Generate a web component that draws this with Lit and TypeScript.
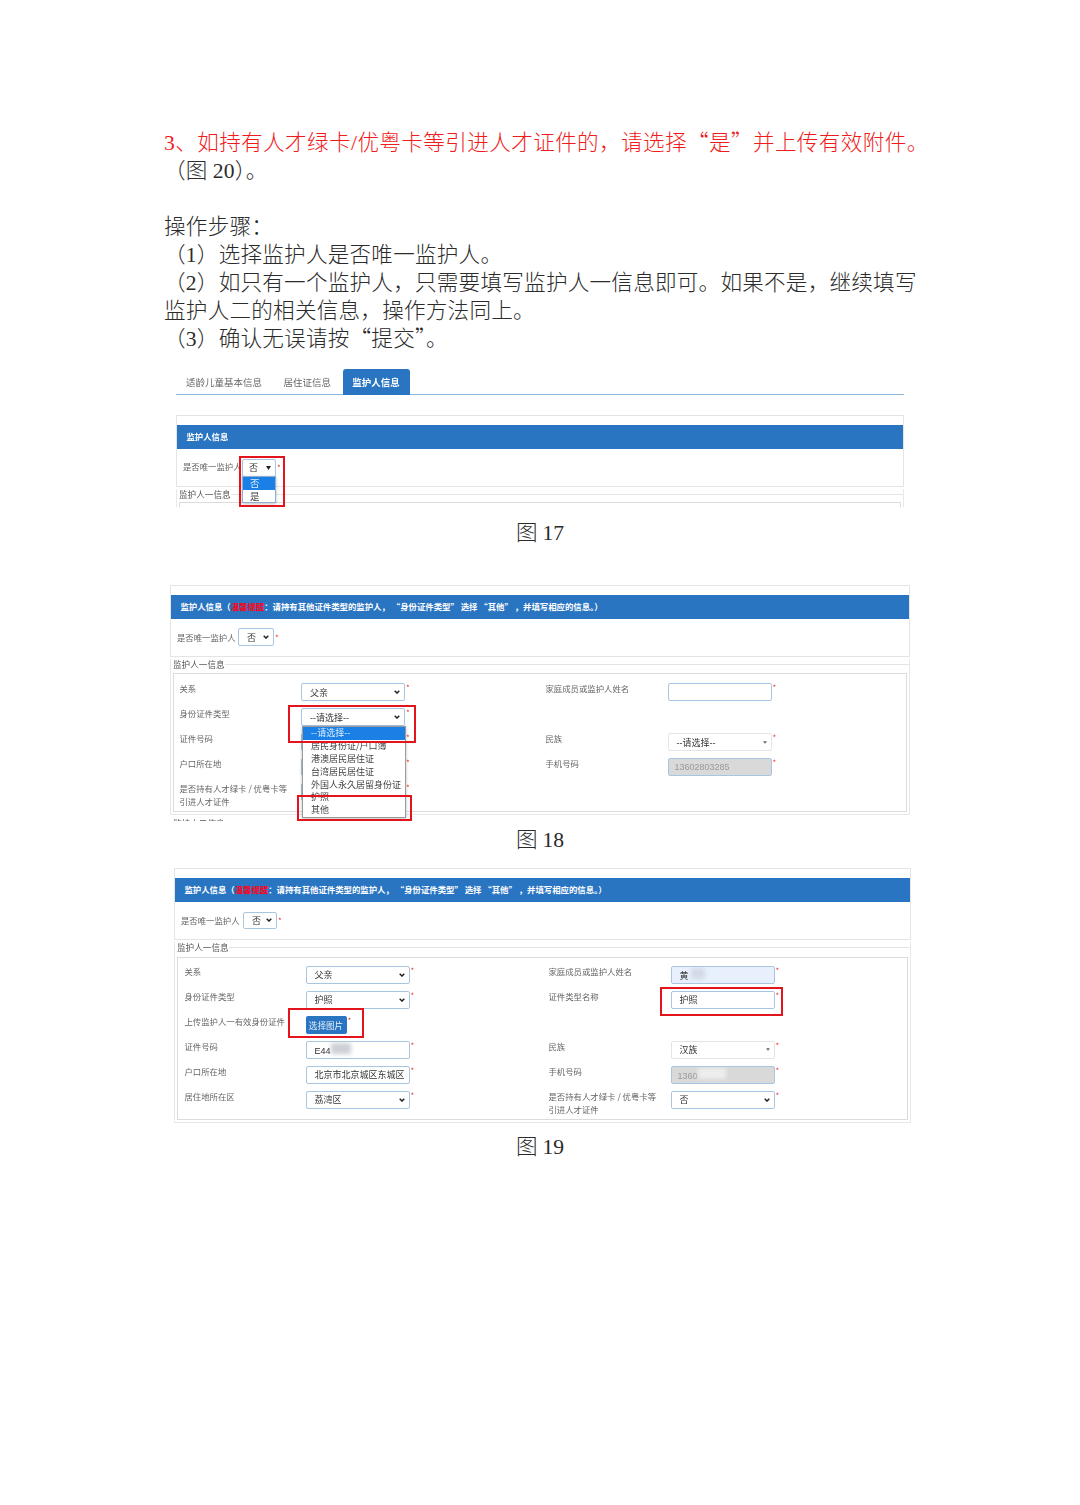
import { LitElement, html, css, nothing, TemplateResult } from "lit";
import { customElement } from "lit/decorators.js";

type Ctl = { kind: "select" | "caret" | "input" | "disabled" | "filled" | "button"; value?: string; blur?: string; star?: boolean };
type Row = { l?: string | string[]; lc?: Ctl; r?: string | string[]; rc?: Ctl };

const FIG18: Row[] = [
  { l: "关系", lc: { kind: "select", value: "父亲" }, r: "家庭成员或监护人姓名", rc: { kind: "input" } },
  { l: "身份证件类型", lc: { kind: "select", value: "--请选择--" } },
  { l: "证件号码", lc: { kind: "input" }, r: "民族", rc: { kind: "caret", value: "--请选择--" } },
  { l: "户口所在地", lc: { kind: "input" }, r: "手机号码", rc: { kind: "disabled", value: "13602803285" } },
  { l: ["是否持有人才绿卡 / 优粤卡等", "引进人才证件"], lc: { kind: "input" } },
];

const FIG19: Row[] = [
  { l: "关系", lc: { kind: "select", value: "父亲" }, r: "家庭成员或监护人姓名", rc: { kind: "filled", value: "黄", blur: "b-name" } },
  { l: "身份证件类型", lc: { kind: "select", value: "护照" }, r: "证件类型名称", rc: { kind: "input", value: "护照" } },
  { l: "上传监护人一有效身份证件", lc: { kind: "button", value: "选择图片" } },
  { l: "证件号码", lc: { kind: "input", value: "E44", blur: "b-id" }, r: "民族", rc: { kind: "caret", value: "汉族" } },
  { l: "户口所在地", lc: { kind: "input", value: "北京市北京城区东城区" }, r: "手机号码", rc: { kind: "disabled", value: "1360", blur: "b-phone" } },
  { l: "居住地所在区", lc: { kind: "select", value: "荔湾区" }, r: ["是否持有人才绿卡 / 优粤卡等", "引进人才证件"], rc: { kind: "select", value: "否" } },
];

const OPTIONS = ["--请选择--", "居民身份证/户口簿", "港澳居民居住证", "台湾居民居住证", "外国人永久居留身份证", "护照", "其他"];

const chevron = html`<svg class="chev" viewBox="0 0 6 4" width="6" height="4"><path d="M.7.7 3 3.1 5.3.7" fill="none" stroke="#222" stroke-width="1.4"/></svg>`;
const caret = html`<svg class="chev" viewBox="0 0 5 3" width="4" height="3"><path d="M0 0h5L2.5 3z" fill="#666"/></svg>`;
const tri = html`<svg class="chev" viewBox="0 0 5 4" width="5" height="4"><path d="M0 0h5L2.5 4z" fill="#222"/></svg>`;

@customElement("app-root")
export class AppRoot extends LitElement {
  static styles = css`
    :host { display: block; width: 1080px; height: 1505px; background: #fff; overflow: hidden; }
    .page { display: flex; flex-direction: column; padding-top: 127px; font-family: "Noto Sans CJK SC", sans-serif; }
    .doc { margin: 0 0 0 164px; width: 770px; font-size: 21.6px; line-height: 28px; color: #2b2b2b; font-weight: 300; letter-spacing: .22px; }
    .doc p { margin: 0; white-space: nowrap; height: 28px; }
    .doc .red { color: #f01c1c; letter-spacing: .38px; }
    .num { font-family: "Liberation Serif", serif; }
    .cap { text-align: center; font-size: 21.6px; line-height: 28px; height: 28px; color: #2b2b2b; font-weight: 300; }

    .fig { position: relative; overflow: hidden; filter: blur(0.35px); font-size: 8.4px; color: #666; }
    .f17 { margin: 18px 0 0 176px; width: 728px; height: 138px; }
    .f18 { margin: 40px 0 0 170px; width: 740px; height: 236px; }
    .f19 { margin: 16px 0 0 174px; width: 737px; height: 256px; }
    .c17 { margin-top: 10px; }
    .c18 { margin-top: 3px; }
    .c19 { margin-top: 7px; }

    .tabs { display: flex; height: 25px; border-bottom: 1px solid #8fb8dc; padding-left: 10px; font-size: 9.5px; color: #666; line-height: 26px; }
    .tab { margin-right: 21.5px; }
    .tab.on { background: #2a75c2; color: #fff; font-weight: 700; margin: 0 0 -1px -10px; width: 67px; height: 26px; text-align: center; border-radius: 3px 3px 0 0; }
    .panel { border: 1px solid #e4e4e4; padding-top: 9px; }
    .f17 .panel { margin-top: 20px; height: 61px; padding-top: 9px; }
    .f18 .panel, .f19 .panel { height: 61px; }
    .bar { height: 23.5px; line-height: 23.5px; background: #2a75c2; color: #fff; font-weight: 700; padding-left: 9.5px; font-size: 8.4px; white-space: pre; overflow: hidden; }
    .bar b { color: #e8102c; }
    .sel-row { display: flex; align-items: center; padding-left: 6px; height: 37px; }
    .f17 .sel-row { height: 38px; }
    .sel-label { width: 61px; flex: none; margin-top: -1px; }
    .f19 .sel-label { width: 62px; }
    .f17 .sel-label { width: 59px; margin-top: -3px; }

    .fieldset { margin-top: 2px; border: 1px solid #e8e8e8; border-top: 0; border-bottom: 0; }
    .f18 .fieldset, .f19 .fieldset { border-bottom: 1px solid #e8e8e8; padding-bottom: 2px; }
    .legend { display: flex; align-items: center; height: 10px; margin-left: 2px; font-size: 8.6px; color: #555; }
    .legend i { flex: 1; height: 1px; background: #e4e4e4; }
    .f19 .legend { margin-top: 2px; margin-left: 2px; }
    .f17 .legend { margin-top: 2px; }
    .f17 .inner { margin-top: 3px; height: 20px; }
    .inner { margin: 4px 2px 0 2px; border: 1px solid #dcdcdc; height: 139px; padding: 9px 0 0 5.5px; box-sizing: border-box; }
    .f19 .inner { height: 163px; margin-top: 4.5px; padding: 8px 0 0 6.5px; }
    .form { display: grid; grid-template-columns: 121.5px 244.5px 122px 130px; grid-auto-rows: 25px; }
    .f19 .form { grid-template-columns: 121px 243px 122px 130px; }
    .lab { line-height: 13px; white-space: nowrap; margin-top: -1px; }
    .cell { display: flex; align-items: flex-start; }

    .ctl { box-sizing: border-box; width: 104px; height: 18px; border: 1px solid #a9c6e0; border-radius: 2px; background: #fff; display: flex; align-items: center; justify-content: space-between; padding: 0 4px 0 8px; font-size: 9px; color: #333; overflow: hidden; white-space: nowrap; position: relative; font-family: "Liberation Sans", "Noto Sans CJK SC", sans-serif; }
    .ctl.caret { border-color: #e4e4e4; }
    .ctl.disabled { background: #d9d9d9; color: #9a9a9a; padding-left: 6px; }
    .ctl.filled { background: #e8f0fe; }
    .ctl.input { justify-content: flex-start; padding-right: 2px; }
    .ctl.disabled, .ctl.filled { justify-content: flex-start; }
    .btn { box-sizing: border-box; width: 41px; height: 18px; background: #2a75c2; color: #e6f0fa; border-radius: 2px; font-size: 8.6px; line-height: 18px; text-align: center; }
    .star { color: #e33; font-size: 8px; line-height: 9px; margin-left: 1px; }
    .smallsel { width: 36px; padding-left: 8px; }
    .f17 .smallsel { width: 34px; padding-left: 6px; }
    .f19 .smallsel { width: 34px; height: 17px; }
    .blur { display: inline-block; height: 11px; background: #aab0b8; filter: blur(2px); opacity: .6; }
    .b-name { width: 14px; margin-left: 2px; background: #c4cbd6; }
    .b-id { width: 20px; }
    .b-phone { width: 28px; background: #eee; opacity: 1; }

    .drop { position: absolute; box-sizing: border-box; background: #fff; border: 1px solid #9a9a9a; box-shadow: 0 1px 3px rgba(0,0,0,.25); font-size: 9px; color: #444; z-index: 1; }
    .drop div { height: 12.9px; line-height: 12.9px; padding-left: 8px; white-space: nowrap; }
    .drop .hit { background: #1a80e6; color: #dfeeff; }
    .d18 { left: 132px; top: 141px; width: 104px; height: 92px; }
    .d17 { left: 66px; top: 107px; width: 34px; height: 27px; border-color: #8fb0d0; font-size: 9.5px; }
    .d17 div { height: 13px; line-height: 13px; padding-left: 7px; }

    .mark { position: absolute; box-sizing: border-box; border: 2px solid #e3141c; z-index: 2; }
    .m17 { left: 63px; top: 87px; width: 46px; height: 51px; }
    .m18a { left: 118px; top: 120px; width: 128px; height: 38px; }
    .m18b { left: 127px; top: 210px; width: 115px; height: 26px; }
    .m19a { left: 114px; top: 140px; width: 76px; height: 30px; }
    .m19b { left: 486px; top: 119px; width: 123px; height: 29px; }
    .cut { position: absolute; left: 3px; top: 232px; font-size: 8.6px; color: #555; }
  `;

  private control(c: Ctl, small = false): TemplateResult {
    if (c.kind === "button") return html`<div class="btn">${c.value}</div><span class="star">*</span>`;
    const cls = `ctl ${c.kind} ${small ? "smallsel" : ""}`;
    return html`<div class=${cls}>
      <span>${c.value ?? ""}${c.blur ? html`<span class="blur ${c.blur}"></span>` : nothing}</span>
      ${c.kind === "select" ? chevron : c.kind === "caret" ? caret : nothing}
    </div><span class="star">*</span>`;
  }

  private label(l?: string | string[]) {
    const lines = Array.isArray(l) ? l : l ? [l] : [];
    return html`<div class="lab">${lines.map((t) => html`<div>${t}</div>`)}</div>`;
  }

  private form(rows: Row[]) {
    return html`<div class="form">
      ${rows.map((r) => html`
        ${this.label(r.l)}
        <div class="cell">${r.lc ? this.control(r.lc) : nothing}</div>
        ${this.label(r.r)}
        <div class="cell">${r.rc ? this.control(r.rc) : nothing}</div>
      `)}
    </div>`;
  }

  private guardian(rows: Row[]) {
    return html`
      <div class="panel">
        <div class="bar">监护人信息（<b>温馨提醒</b>：请持有其他证件类型的监护人， “身份证件类型” 选择 “其他” ，并填写相应的信息。）</div>
        <div class="sel-row">
          <div class="sel-label">是否唯一监护人</div>
          ${this.control({ kind: "select", value: "否" }, true)}
        </div>
      </div>
      <div class="fieldset">
        <div class="legend"><span>监护人一信息</span><i></i></div>
        <div class="inner">${this.form(rows)}</div>
      </div>`;
  }

  render() {
    return html`<div class="page" lang="zh-CN">
      <div class="doc">
        <p class="red"><span class="num">3</span>、如持有人才绿卡<span class="num">/</span>优粤卡等引进人才证件的，请选择“是”并上传有效附件。</p>
        <p>（图 <span class="num">20</span>）。</p>
        <p></p>
        <p>操作步骤：</p>
        <p>（<span class="num">1</span>）选择监护人是否唯一监护人。</p>
        <p>（<span class="num">2</span>）如只有一个监护人，只需要填写监护人一信息即可。如果不是，继续填写</p>
        <p>监护人二的相关信息，操作方法同上。</p>
        <p>（<span class="num">3</span>）确认无误请按“提交”。</p>
      </div>

      <div class="fig f17">
        <div class="tabs">
          <div class="tab">适龄儿童基本信息</div>
          <div class="tab" >居住证信息</div>
          <div class="tab on">监护人信息</div>
        </div>
        <div class="panel">
          <div class="bar">监护人信息</div>
          <div class="sel-row">
            <div class="sel-label">是否唯一监护人</div>
            <div class="ctl smallsel"><span>否</span>${tri}</div><span class="star">*</span>
          </div>
        </div>
        <div class="fieldset">
          <div class="legend"><span>监护人一信息</span><i></i></div>
          <div class="inner"></div>
        </div>
        <div class="drop d17"><div class="hit">否</div><div>是</div></div>
        <div class="mark m17"></div>
      </div>
      <div class="cap c17">图 <span class="num">17</span></div>

      <div class="fig f18">
        ${this.guardian(FIG18)}
        <div class="drop d18">${OPTIONS.map((o, i) => html`<div class=${i === 0 ? "hit" : ""}>${o}</div>`)}</div>
        <div class="mark m18a"></div>
        <div class="mark m18b"></div>
        <div class="cut">监护人二信息</div>
      </div>
      <div class="cap c18">图 <span class="num">18</span></div>

      <div class="fig f19">
        ${this.guardian(FIG19)}
        <div class="mark m19a"></div>
        <div class="mark m19b"></div>
      </div>
      <div class="cap c19">图 <span class="num">19</span></div>
    </div>`;
  }
}
